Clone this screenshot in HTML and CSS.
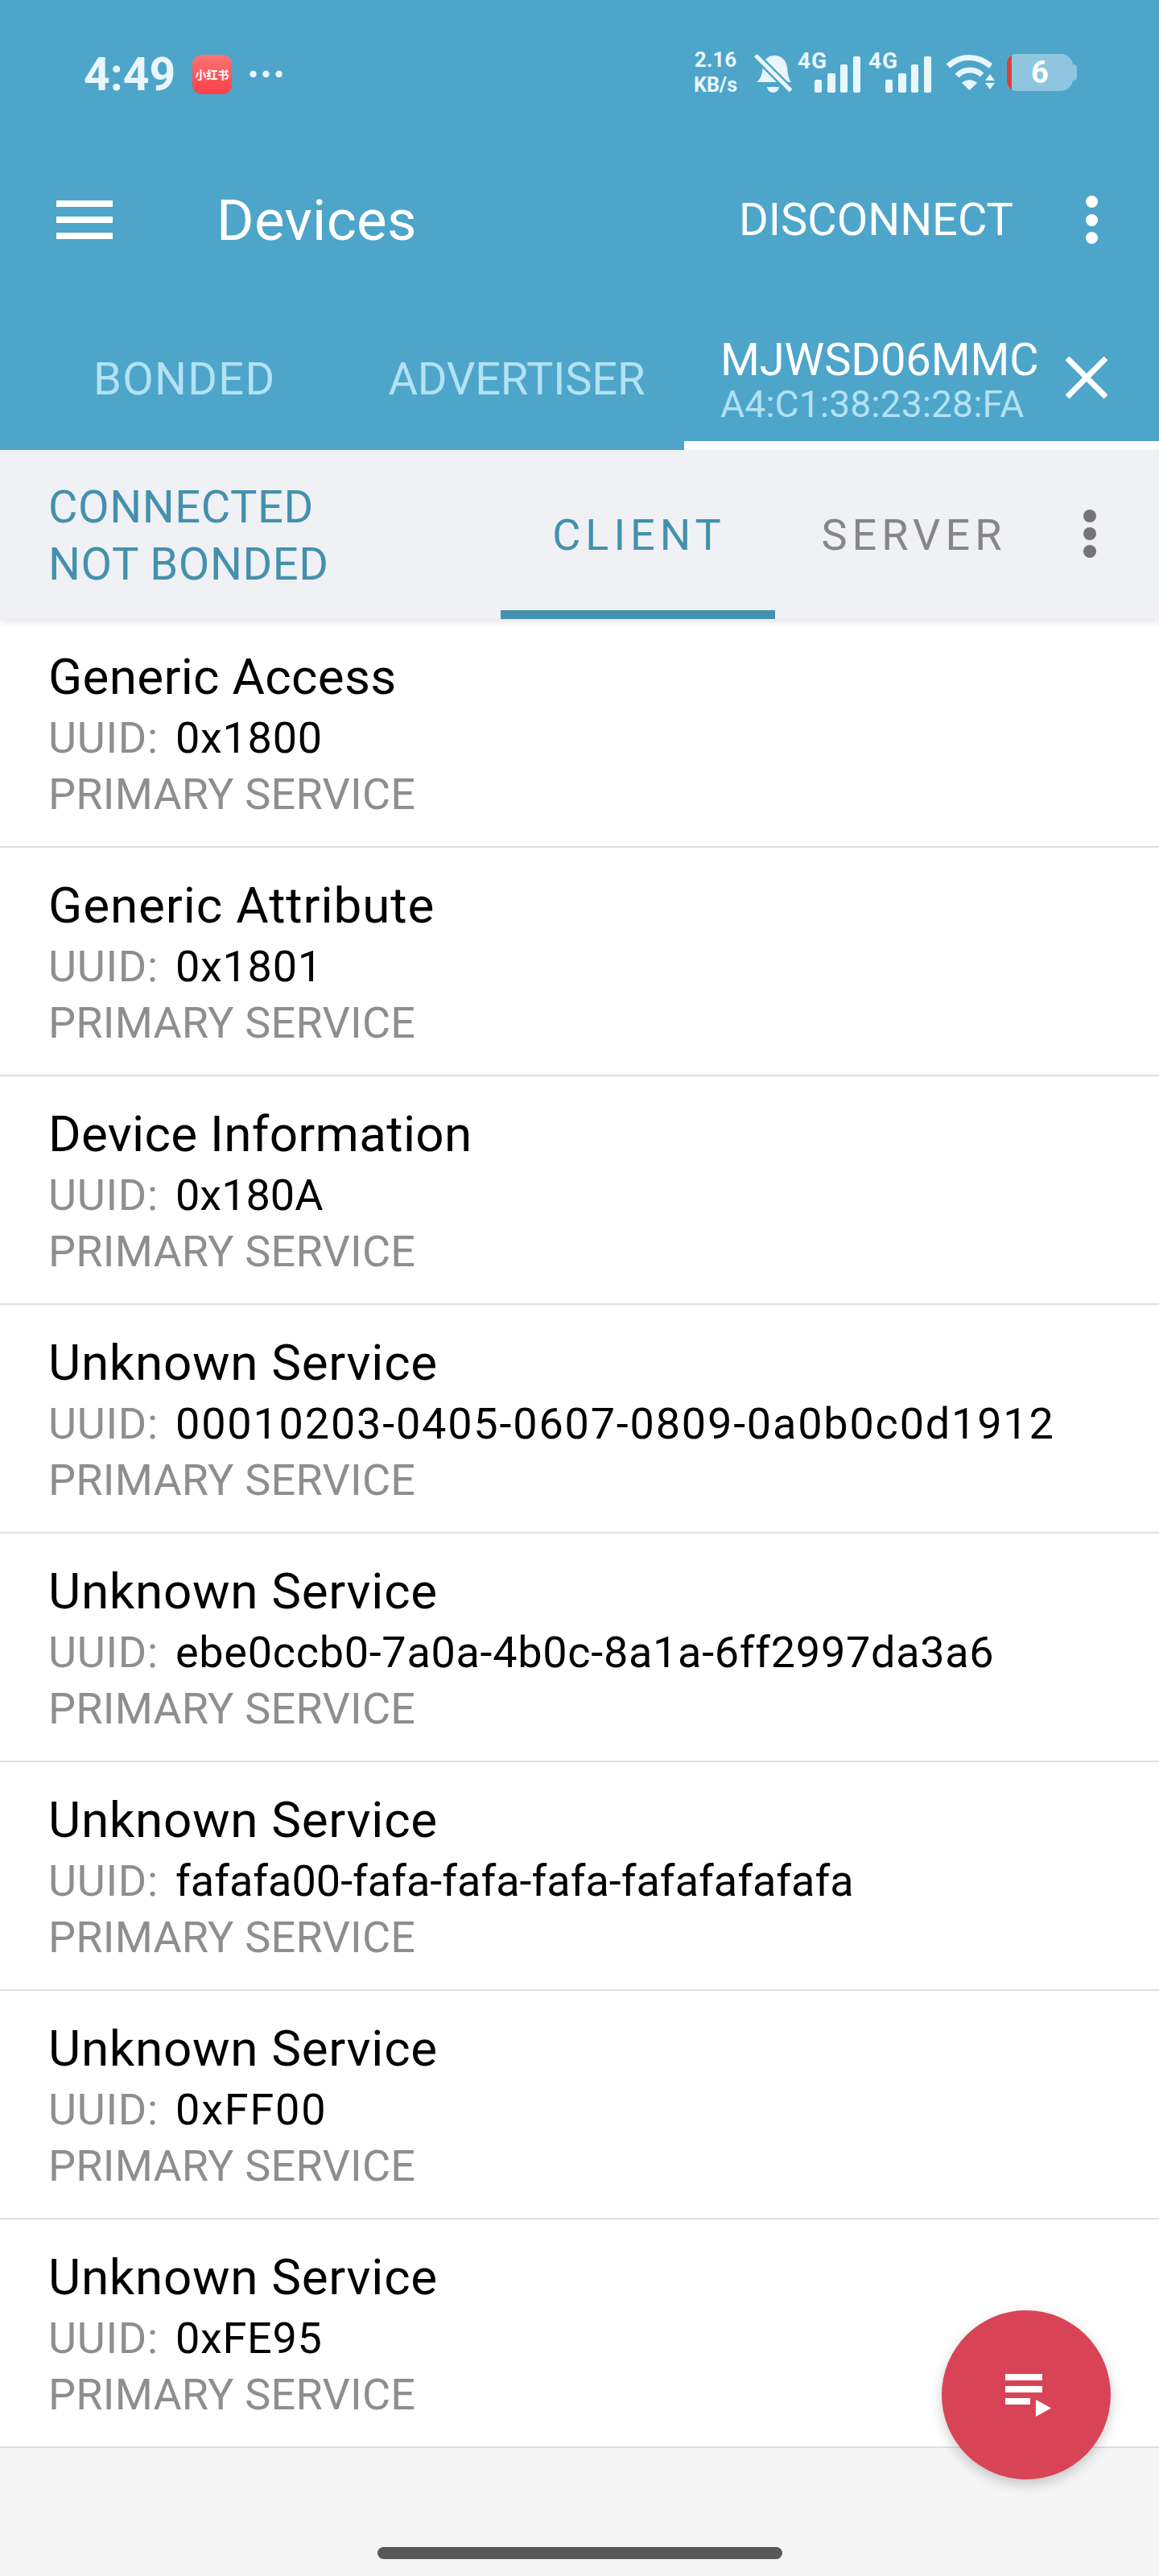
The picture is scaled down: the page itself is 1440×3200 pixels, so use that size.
FILE: index.html
```html
<!DOCTYPE html>
<html lang="en">
<head>
    <meta charset="UTF-8">
    <meta name="viewport" content="width=device-width, initial-scale=1.0">
    <title>Devices</title>
    <link rel="stylesheet" href="styles.css">
</head>
<body>
    <div class="page">
        <header class="app-header">
            <div class="status-bar">
                <span class="clock">4:49</span>
                <span class="app-badge">小红书</span>
                <svg class="more-dots" viewBox="0 0 41 10"><circle cx="4.5" cy="5" r="4.2"/><circle cx="20.5" cy="5" r="4.2"/><circle cx="36.5" cy="5" r="4.2"/></svg>
                <div class="status-icons">
                    <div class="net-speed"><span>2.16</span><span class="net-unit">KB/s</span></div>
                    <svg class="bell" viewBox="0 0 50 52">
                        <path d="M5 38c4-3 6-7 7-13l1-8c2-8 7-12 14-12 9 0 15 6 16 15l1 8c1 5 2 7 4 10z"/>
                        <path d="M18 44h15c-1 5-4 7-7.500 7s-6.500-2-7.500-7z"/>
                        <rect class="bell-gap" x="-3" y="21" width="66" height="10" transform="rotate(45 25 26)"/>
                        <rect x="-5" y="23.500" width="62" height="5" transform="rotate(45 25 26)"/>
                    </svg>
                    <div class="signal">
                        <span class="signal-label">4G</span>
                        <svg class="signal-bars" viewBox="0 0 78 50">
                            <rect x="21" y="34" width="9" height="16" rx="2"/>
                            <rect x="37" y="26" width="10" height="24" rx="2"/>
                            <rect x="53" y="15" width="9" height="35" rx="2"/>
                            <rect x="69" y="5" width="9" height="45" rx="2"/>
                        </svg>
                    </div>
                    <div class="signal">
                        <span class="signal-label">4G</span>
                        <svg class="signal-bars" viewBox="0 0 78 50">
                            <rect x="21" y="34" width="9" height="16" rx="2"/>
                            <rect x="37" y="26" width="10" height="24" rx="2"/>
                            <rect x="53" y="15" width="9" height="35" rx="2"/>
                            <rect x="69" y="5" width="9" height="45" rx="2"/>
                        </svg>
                    </div>
                    <svg class="wifi" viewBox="0 0 62 46">
                        <path class="wifi-arc" d="M3 15C18 1 39 1 56 15"/>
                        <path class="wifi-arc" d="M14 27C23 18 36 18 45 26"/>
                        <path d="M20 36c6-5 13-5 19 0l-9.500 9z"/>
                        <path d="M55 25l6 8H49zM49 36h12l-6 8z"/>
                    </svg>
                    <div class="battery">
                        <div class="battery-body">
                            <span class="battery-low"></span>
                            <span class="battery-level">6</span>
                        </div>
                        <span class="battery-nub"></span>
                    </div>
                </div>
            </div>

            <div class="toolbar">
                <div class="hamburger"><span></span><span></span><span></span></div>
                <h1 class="toolbar-title">Devices</h1>
                <span class="toolbar-action">DISCONNECT</span>
                <div class="kebab"><span></span><span></span><span></span></div>
            </div>

            <nav class="device-tabs">
                <span class="device-tab device-tab-bonded">BONDED</span>
                <span class="device-tab">ADVERTISER</span>
                <div class="device-tab-active">
                    <div class="device-tab-text">
                        <span class="device-name">MJWSD06MMC</span>
                        <span class="device-mac">A4:C1:38:23:28:FA</span>
                    </div>
                    <svg class="close-icon" viewBox="0 0 52 52"><path d="M2 2l48 48M50 2L2 50"/></svg>
                </div>
            </nav>
        </header>

        <div class="sub-bar">
            <div class="conn-state">
                <span>CONNECTED</span>
                <span>NOT BONDED</span>
            </div>
            <div class="sub-tab sub-tab-active">CLIENT</div>
            <div class="sub-tab sub-tab-server">SERVER</div>
            <div class="kebab kebab-grey"><span></span><span></span><span></span></div>
        </div>

        <ul class="service-list">
            <li class="service">
                <div class="service-name">Generic Access</div>
                <div class="service-uuid"><span class="uuid-label">UUID:</span><span>0x1800</span></div>
                <div class="service-type">PRIMARY SERVICE</div>
            </li>
            <li class="service">
                <div class="service-name name-wider">Generic Attribute</div>
                <div class="service-uuid"><span class="uuid-label">UUID:</span><span>0x1801</span></div>
                <div class="service-type">PRIMARY SERVICE</div>
            </li>
            <li class="service">
                <div class="service-name">Device Information</div>
                <div class="service-uuid"><span class="uuid-label">UUID:</span><span class="uuid-narrow">0x180A</span></div>
                <div class="service-type">PRIMARY SERVICE</div>
            </li>
            <li class="service">
                <div class="service-name name-wide">Unknown Service</div>
                <div class="service-uuid"><span class="uuid-label">UUID:</span><span class="uuid-wide">00010203-0405-0607-0809-0a0b0c0d1912</span></div>
                <div class="service-type">PRIMARY SERVICE</div>
            </li>
            <li class="service">
                <div class="service-name name-wide">Unknown Service</div>
                <div class="service-uuid"><span class="uuid-label">UUID:</span><span>ebe0ccb0-7a0a-4b0c-8a1a-6ff2997da3a6</span></div>
                <div class="service-type">PRIMARY SERVICE</div>
            </li>
            <li class="service">
                <div class="service-name name-wide">Unknown Service</div>
                <div class="service-uuid"><span class="uuid-label">UUID:</span><span class="uuid-narrow">fafafa00-fafa-fafa-fafa-fafafafafafa</span></div>
                <div class="service-type">PRIMARY SERVICE</div>
            </li>
            <li class="service">
                <div class="service-name name-wide">Unknown Service</div>
                <div class="service-uuid"><span class="uuid-label">UUID:</span><span class="uuid-wide">0xFF00</span></div>
                <div class="service-type">PRIMARY SERVICE</div>
            </li>
            <li class="service">
                <div class="service-name name-wide">Unknown Service</div>
                <div class="service-uuid"><span class="uuid-label">UUID:</span><span>0xFE95</span></div>
                <div class="service-type">PRIMARY SERVICE</div>
            </li>
        </ul>

        <div class="bottom-area">
            <div class="home-bar"></div>
        </div>

        <button class="fab">
            <svg class="fab-icon" viewBox="0 0 57 53"><path d="M0 0h46v8H0zM0 15h46v8H0zM0 30h31v8H0zM38 32l19 10.500L38 53z"/></svg>
        </button>
    </div>
</body>
</html>
```

FILE: styles.css
```css
* {
    box-sizing: border-box;
}

body {
    margin: 0;
    font-family: 'Roboto', 'Noto Sans CJK SC', sans-serif;
    background-color: #f5f5f5;
}

.page {
    position: relative;
    width: 1440px;
    height: 3200px;
    display: flex;
    flex-direction: column;
    overflow: hidden;
}

/* header */
.app-header {
    background-color: #4ea5ca;
    color: #ffffff;
    flex: none;
}

.status-bar {
    height: 184px;
    padding-left: 104px;
    padding-right: 102px;
    display: flex;
    align-items: center;
    color: #e9f7fd;
}

.clock {
    font-size: 57px;
    font-weight: 700;
    width: 135px;
}

.app-badge {
    width: 49px;
    height: 49px;
    border-radius: 12px;
    background-image: linear-gradient(to bottom, #fb7474, #fb3f46);
    color: #ffffff;
    font-size: 14px;
    font-weight: 700;
    display: flex;
    align-items: center;
    justify-content: center;
    white-space: nowrap;
}

.more-dots {
    width: 41px;
    height: 10px;
    margin-left: 22px;
    fill: #e9f7fd;
}

.status-icons {
    margin-left: auto;
    display: flex;
    align-items: center;
    height: 52px;
    margin-top: -4px;
    fill: #e9f7fd;
}

.net-speed {
    width: 62px;
    display: flex;
    flex-direction: column;
    align-items: center;
    font-size: 26px;
    font-weight: 700;
    line-height: 32px;
}

.net-unit {
    font-size: 25px;
}

.bell {
    width: 50px;
    height: 52px;
    margin-left: 15px;
}

.bell-gap {
    fill: #4ea5ca;
}

.signal {
    position: relative;
    width: 78px;
    height: 50px;
    margin-left: 6px;
}

.signal + .signal {
    margin-left: 10px;
}

.signal-bars {
    display: block;
    width: 78px;
    height: 50px;
}

.signal-label {
    position: absolute;
    left: 0;
    top: -4px;
    font-size: 28px;
    line-height: 30px;
    font-weight: 700;
    letter-spacing: 1px;
}

.wifi {
    width: 62px;
    height: 46px;
    margin-left: 18px;
}

.wifi-arc {
    fill: none;
    stroke: #e9f7fd;
    stroke-width: 7;
}

.battery {
    width: 87px;
    height: 46px;
    margin-left: 14px;
    display: flex;
    align-items: center;
}

.battery-body {
    position: relative;
    width: 82px;
    height: 46px;
    background-color: #8ec6e0;
    border-radius: 12px 15px 15px 12px;
    display: flex;
    align-items: center;
    justify-content: center;
    overflow: hidden;
}

.battery-low {
    position: absolute;
    left: 0;
    top: 0;
    bottom: 0;
    width: 6px;
    background-color: #dc4238;
}

.battery-level {
    font-size: 38px;
    font-weight: 700;
    color: #ffffff;
}

.battery-nub {
    width: 5px;
    height: 20px;
    border-radius: 0 4px 4px 0;
    background-color: #8ec6e0;
}

.toolbar {
    height: 178px;
    padding-left: 70px;
    display: flex;
    align-items: center;
}

.hamburger {
    width: 70px;
    height: 48px;
    display: flex;
    flex-direction: column;
    justify-content: space-between;
}

.hamburger span {
    height: 8px;
    background-color: #ffffff;
}

.toolbar-title {
    margin: 0 0 0 129px;
    font-size: 71px;
    font-weight: 400;
    letter-spacing: 0.3px;
}

.toolbar-action {
    margin-left: auto;
    font-size: 56px;
}

.kebab {
    width: 15px;
    height: 60px;
    margin-left: 90px;
    margin-right: 76px;
    display: flex;
    flex-direction: column;
    justify-content: space-between;
}

.kebab span {
    height: 15px;
    border-radius: 50%;
    background-color: #ffffff;
}

.device-tabs {
    height: 197px;
    padding-left: 116px;
    display: flex;
    align-items: flex-start;
}

.device-tab {
    margin-top: 76px;
    font-size: 56px;
    letter-spacing: -0.2px;
    color: #b2e2f3;
}

.device-tab-bonded {
    margin-right: 140px;
    letter-spacing: 1.3px;
}

.device-tab-active {
    flex: none;
    margin-left: auto;
    width: 590px;
    height: 197px;
    padding: 54px 64px 0 45px;
    border-bottom: 11px solid #ffffff;
    display: flex;
    justify-content: space-between;
}

.device-tab-text {
    display: flex;
    flex-direction: column;
}

.device-name {
    font-size: 56px;
    line-height: 63px;
    letter-spacing: -0.1px;
}

.device-mac {
    font-size: 46px;
    line-height: 46px;
    letter-spacing: 0.2px;
    color: #b2e2f3;
}

.close-icon {
    width: 52px;
    height: 52px;
    margin-top: 27px;
    fill: none;
    stroke: #ffffff;
    stroke-width: 7;
}

/* client / server bar */
.sub-bar {
    position: relative;
    height: 210px;
    padding-left: 60px;
    background-color: #eff1f4;
    box-shadow: 0 4px 8px rgba(0, 0, 0, 0.1);
    display: flex;
    align-items: stretch;
    flex: none;
}

.conn-state {
    width: 562px;
    padding-top: 36px;
    display: flex;
    flex-direction: column;
    font-size: 56px;
    line-height: 71px;
    letter-spacing: 0.6px;
    color: #4490ae;
}

.sub-tab {
    font-size: 54px;
    letter-spacing: 6px;
    display: flex;
    justify-content: center;
    padding-top: 74px;
}

.sub-tab-active {
    width: 341px;
    padding-left: 3px;
    color: #4490ae;
    border-bottom: 11px solid #4490ae;
}

.sub-tab-server {
    width: 323px;
    padding-left: 22px;
    color: #868686;
}

.kebab-grey {
    height: 60px;
    margin: 74px 0 0 60px;
    width: 16px;
}

.kebab-grey span {
    height: 16px;
    background-color: #757575;
}

/* services */
.service-list {
    list-style: none;
    margin: 0;
    padding: 0;
    flex: none;
    background-color: #ffffff;
}

.service {
    height: 284px;
    padding: 36px 0 0 60px;
    border-bottom: 2px solid #dedede;
}

.service-name {
    font-size: 62px;
    line-height: 72px;
    letter-spacing: 0.3px;
    color: #000000;
}

.name-wide {
    letter-spacing: 0.7px;
}

.name-wider {
    letter-spacing: 0.9px;
}

.service-uuid {
    margin-top: 4px;
    display: flex;
    font-size: 54px;
    line-height: 72px;
    letter-spacing: 0.7px;
    color: #000000;
}

.uuid-label {
    width: 158px;
    color: #8e8e8e;
}

.uuid-wide {
    letter-spacing: 1.8px;
}

.uuid-narrow {
    letter-spacing: 0;
}

.service-type {
    margin-top: -2px;
    font-size: 54px;
    line-height: 71px;
    letter-spacing: 0.2px;
    color: #8e8e8e;
}

.bottom-area {
    flex: 1;
    padding-top: 123px;
    background-color: #f5f5f5;
}

.home-bar {
    width: 503px;
    height: 15px;
    margin: 0 auto;
    border-radius: 8px;
    background-color: #585858;
}

.fab {
    position: absolute;
    left: 1170px;
    top: 2870px;
    width: 210px;
    height: 210px;
    padding: 0;
    border: none;
    border-radius: 50%;
    background-color: #d94356;
    box-shadow: 0 6px 16px rgba(0, 0, 0, 0.2);
    display: flex;
    align-items: center;
    justify-content: center;
}

.fab-icon {
    width: 57px;
    height: 53px;
    margin-left: 4px;
    fill: #ffffff;
}
```
